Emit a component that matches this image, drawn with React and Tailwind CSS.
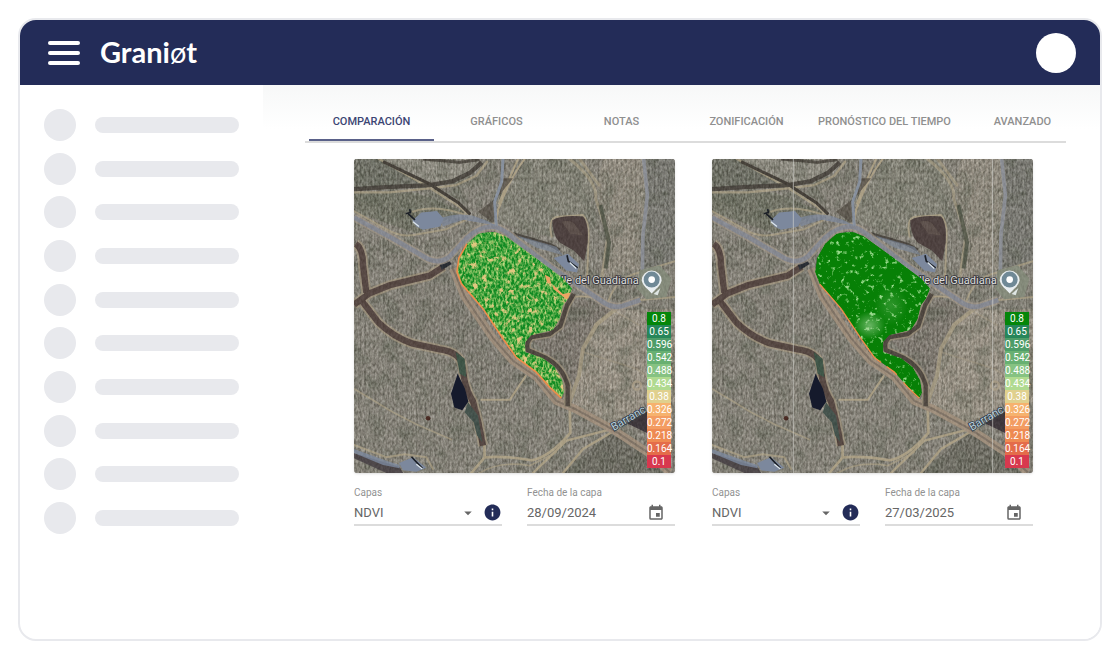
import { useState } from "react";
import { MdArrowDropDown, MdEvent, MdInfo } from "react-icons/md";

const TABS = [
  "Comparación",
  "Gráficos",
  "Notas",
  "Zonificación",
  "Pronóstico del tiempo",
  "Avanzado",
];

const LEGEND = [
  { value: "0.8", color: "bg-[#04860a]" },
  { value: "0.65", color: "bg-[#27865a]" },
  { value: "0.596", color: "bg-[#4d9c68]" },
  { value: "0.542", color: "bg-[#68b072]" },
  { value: "0.488", color: "bg-[#86c282]" },
  { value: "0.434", color: "bg-[#b0da90]" },
  { value: "0.38", color: "bg-[#e0d08e]" },
  { value: "0.326", color: "bg-[#f6b26e]" },
  { value: "0.272", color: "bg-[#f39c62]" },
  { value: "0.218", color: "bg-[#ee8a52]" },
  { value: "0.164", color: "bg-[#e46c4a]" },
  { value: "0.1", color: "bg-[#d8384e]" },
];

const LAYERS = [
  { id: "before", date: "28/09/2024", dense: false },
  { id: "after", date: "27/03/2025", dense: true },
];

const PLOT =
  "M386 236Q410 228 440 231L470 244L560 309L640 369L668 400L655 430L640 450L630 492L610 524L545 540L527 560L527 590L580 608L615 635L638 675L643 712L635 728L600 695L560 650L500 606L460 550L400 460L335 385L322 350L328 308L352 266Z";

const PLOT_EDGE =
  "M352 266L328 308L322 350L335 385L400 460L460 550L500 606L560 650L600 695L635 728";

const ROADS =
  "M13 187L120 245L236 312Q270 326 300 304L350 250Q385 214 432 214Q465 222 500 256L600 333L700 400L760 440Q795 464 830 448L872 434";

const CHANNELS =
  "M13 448L60 414L120 390L240 361L282 334M18 266Q40 280 40 330L50 412M36 436L85 500Q130 545 190 565L270 582Q330 590 338 630L344 672Q352 710 370 738L386 800L400 870";

function Terrain({ id, dense }) {
  return (
    <svg
      viewBox="13 12 963 940"
      preserveAspectRatio="none"
      className="block h-full w-full"
      role="img"
      aria-label="Imagen satelital de la parcela"
    >
      <defs>
        <filter id={`${id}-grain`} x="0" y="0" width="1" height="1" colorInterpolationFilters="sRGB">
          <feTurbulence type="fractalNoise" baseFrequency="0.16 0.09" numOctaves="2" seed="4" />
          <feColorMatrix values="1.5 0 0 0 -0.22  1.5 0 0 0 -0.23  1.5 0 0 0 -0.27  0 0 0 0 0.2" />
        </filter>
        <filter id={`${id}-blotch`} x="0" y="0" width="1" height="1" colorInterpolationFilters="sRGB">
          <feTurbulence type="fractalNoise" baseFrequency="0.02" numOctaves="4" seed="9" />
          <feColorMatrix values="0 0 0 0 0.3  0 0 0 0 0.33  0 0 0 0 0.27  2.5 0 0 0 -1.1" />
        </filter>
        <filter id={`${id}-speckle`} x="0" y="0" width="1" height="1" colorInterpolationFilters="sRGB">
          <feTurbulence
            type="fractalNoise"
            baseFrequency={dense ? "0.07" : "0.15 0.09"}
            numOctaves={dense ? 4 : 2}
            seed="7"
          />
          <feColorMatrix
            values={
              dense
                ? "0 0 0 0 0.6  0 0 0 0 0.86  0 0 0 0 0.55  5 0 0 0 -2.95"
                : "0 0 0 0 0.74  0 0 0 0 0.85  0 0 0 0 0.5  2.4 0 0 0 -0.9"
            }
          />
        </filter>
        <filter id={`${id}-patches`} x="0" y="0" width="1" height="1" colorInterpolationFilters="sRGB">
          <feTurbulence type="fractalNoise" baseFrequency="0.06 0.05" numOctaves="4" seed="21" />
          <feColorMatrix values="0 0 0 0 0.88  0 0 0 0 0.78  0 0 0 0 0.5  6 0 0 0 -3.5" />
        </filter>
        <pattern id={`${id}-rows`} width="14" height="20" patternUnits="userSpaceOnUse">
          <path d="M4 0V20" stroke="#3e3d36" strokeWidth="4" opacity="0.26" />
        </pattern>
        <pattern
          id={`${id}-slant`}
          width="16"
          height="16"
          patternUnits="userSpaceOnUse"
          patternTransform="rotate(52)"
        >
          <path d="M4 0V16" stroke="#b3ab99" strokeWidth="3" opacity="0.35" />
        </pattern>
        <radialGradient id={`${id}-glow`}>
          <stop offset="0" stopColor="#a8d8a0" stopOpacity="0.6" />
          <stop offset="1" stopColor="#a8d8a0" stopOpacity="0" />
        </radialGradient>
        <clipPath id={`${id}-plot`}>
          <path d={PLOT} />
        </clipPath>
      </defs>

      {/* Fields */}
      <path d="M13 12H976V952H13Z" fill="#8b877e" />
      <path d="M13 112H200L345 170L200 235L13 170Z" fill="#737567" />
      <path d="M13 12H90L240 90L13 100Z" fill="#6f7167" />
      <path d="M100 12H400L340 70L250 85Z" fill="#97948a" />
      <path d="M530 12H690L735 90L715 190L610 185L600 245L450 205L445 160Z" fill="#8a897d" />
      <path d="M760 12H880L890 130L876 340L750 380L775 250L740 100Z" fill="#979084" />
      <path d="M890 12H976V320L880 345L895 120Z" fill="#7a7a75" />
      <path d="M735 500L800 465L976 460V740L890 745L790 815L670 745Z" fill="#a2998c" />
      <path d="M640 952L785 830L890 895L940 952Z" fill="#6b6a61" />
      <path d="M60 460L282 345L330 400L490 615L530 665L480 732H395L345 620L280 580L120 525Z" fill="#88847b" />
      <path d="M545 550L640 515L670 430L760 440L795 462L735 505L670 700L640 640Z" fill="#817a72" />
      <path d="M13 12H976V952H13Z" fill={`url(#${id}-rows)`} />
      <path d="M760 12H880L890 130L876 340L750 380L775 250L740 100Z" fill={`url(#${id}-slant)`} />
      <path d="M735 500L800 465L976 460V740L890 745L790 815L670 745Z" fill={`url(#${id}-slant)`} />
      <path d="M770 190L890 110M775 205L880 150" stroke="#aaa397" strokeWidth="4" opacity="0.7" />
      <rect x="13" y="12" width="963" height="940" filter={`url(#${id}-blotch)`} opacity="0.5" />
      <rect x="13" y="12" width="963" height="940" filter={`url(#${id}-grain)`} />

      {/* Dirt tracks */}
      <g fill="none" stroke="#ada186" strokeLinejoin="round" strokeLinecap="round">
        <path d="M88 12L240 98L330 155L368 190M13 112H120L240 100L320 90L380 62L412 20" strokeWidth="7" opacity="0.75" />
        <path d="M13 168L110 222Q150 248 200 238L290 222L368 186M190 170Q260 145 360 184" strokeWidth="6" opacity="0.75" />
        <path d="M525 12Q480 70 445 165L440 200M505 12L470 90L448 145" strokeWidth="6" />
        <path d="M660 12Q745 80 738 130L775 240L755 375M690 12L748 90" strokeWidth="9" opacity="0.6" />
        <path d="M606 245Q595 195 618 186L700 180Q718 200 717 240L712 375" strokeWidth="6" opacity="0.85" />
        <path d="M13 700L130 770L200 806L305 852" strokeWidth="5" opacity="0.7" />
        <path d="M395 733H480L528 662" strokeWidth="6" />
        <path d="M365 952L405 905Q470 900 545 914Q600 905 662 832L660 742M405 905L404 870" strokeWidth="8" />
        <path d="M390 952Q450 915 540 930L620 890" strokeWidth="5" opacity="0.7" />
        <path d="M550 952L650 855L780 822M640 952L700 880L790 828L890 765" strokeWidth="7" />
        <path d="M800 460L740 508L700 580L688 660L662 735" strokeWidth="12" opacity="0.75" />
        <path d="M700 590L860 640L890 660M800 470L870 510" strokeWidth="5" opacity="0.4" />
        <path d="M870 350L976 318M870 352Q800 365 775 440M872 434L976 425" strokeWidth="6" opacity="0.8" />
        <path d="M13 868L110 905L165 896L230 905L250 940" strokeWidth="6" opacity="0.8" />
        <path d="M670 425Q700 420 740 428" strokeWidth="5" />
      </g>

      {/* Drainage channels */}
      <path d={CHANNELS} fill="none" stroke="#a4977f" strokeWidth="30" opacity="0.75" />
      <path d={CHANNELS} fill="none" stroke="#53443f" strokeWidth="19" />
      <g fill="none" stroke="#403b35" strokeLinejoin="round">
        <path d="M13 102L110 96L240 90L310 78L360 54L396 22" strokeWidth="13" opacity="0.85" />
        <path d="M100 20L235 84L325 142L362 178" strokeWidth="9" />
        <path d="M220 12L330 22L390 14" strokeWidth="9" opacity="0.8" />
        <path d="M455 226L540 250L600 268L630 285" strokeWidth="10" opacity="0.85" />
        <path d="M752 150L778 262L768 340" strokeWidth="12" stroke="#474d40" opacity="0.8" />
      </g>
      <path d="M462 70L436 132L385 170L432 206V140L490 70Z" fill="#504a41" opacity="0.75" />
      <path d="M608 195Q640 178 700 184Q718 200 714 262L704 318L672 286L630 262Q608 240 608 195Z" fill="#4a3d3c" />
      <path d="M636 200Q668 192 680 214L700 240L662 236Z" fill="#63554f" opacity="0.7" />
      <path d="M270 328L296 314L306 326L276 344Z" fill="#22262e" />
      <path d="M13 892L150 934L160 952H110L13 908Z" fill="#4a4447" />
      <path d="M830 802L892 768V832Z" fill="#3a3238" />
      <path d="M318 590L345 610L350 665L330 655Z" fill="#3a5244" />
      <path d="M355 740L385 780L398 860L382 840L372 800L345 770Z" fill="#40504a" />
      <circle cx="235" cy="788" r="7" fill="#47261f" />
      <circle cx="862" cy="690" r="12" fill="none" stroke="#a99d87" strokeWidth="7" />

      {/* Paved roads */}
      <g fill="none" strokeLinejoin="round">
        <path d={ROADS} stroke="#a1978a" strokeWidth="24" opacity="0.75" />
        <path d={ROADS} stroke="#868993" strokeWidth="14" />
        <path d="M460 12L456 80L435 140L440 212" stroke="#8791a0" strokeWidth="9" />
        <path d="M882 12L893 120L880 240L878 350L886 420" stroke="#8b8f96" strokeWidth="11" />
        <path d="M310 340L345 424L430 548L490 616L560 664L620 736L680 762L790 822L900 894L960 950" stroke="#a08f7c" strokeWidth="24" />
        <path d="M310 340L345 424L430 548L490 616L560 664L620 736L680 762L790 822L900 894L960 950" stroke="#7f7265" strokeWidth="6" />
        <path d="M672 416L652 450L632 512L600 536L545 545Q528 560 534 584L590 608Q640 635 654 690L654 752" stroke="#958a76" strokeWidth="22" />
        <path d="M672 416L652 450L632 512L600 536L545 545Q528 560 534 584L590 608Q640 635 654 690L654 752" stroke="#4b433c" strokeWidth="13" />
      </g>
      <path d="M870 345L930 330L965 370L950 425L890 432L862 400Z" fill="#858b7b" />
      <rect x="13" y="12" width="963" height="940" filter={`url(#${id}-grain)`} opacity="0.4" />

      {/* Water */}
      <g fill="#7c889d">
        <path d="M188 196L215 172L262 168L282 190L272 214L220 224L200 214Z" />
        <path d="M270 190Q320 172 370 182L410 196L440 212L400 204L340 194L280 214Z" opacity="0.7" />
        <path d="M612 308L655 296L688 326L682 352L650 346Z" />
        <path d="M500 240L620 275L640 300L560 278Z" opacity="0.6" />
        <path d="M148 922L190 905L230 936L200 948L160 944Z" />
        <path d="M13 880L110 915L150 928V938L100 928L13 892Z" opacity="0.8" />
      </g>
      <path d="M324 655L346 700L356 738L338 764L314 756L304 715Z" fill="#151a2c" />
      <path d="M168 176L182 172L180 162M176 176L196 194M652 300L656 318L684 338M186 904L218 938" stroke="#1c2027" strokeWidth="5" fill="none" />
      <path d="M190 200L208 214M660 322L680 340M200 926L218 940" stroke="#dde6ec" strokeWidth="4" />

      {/* Place name sits under the index layer */}
      <text
        x="634"
        y="387"
        fontFamily="Roboto, sans-serif"
        fontSize="33"
        fill="#dcdcda"
        stroke="#34343a"
        strokeWidth="5"
        paintOrder="stroke"
      >
        lle del Guadiana
      </text>
      <text
        x="792"
        y="826"
        transform="rotate(-30 792 826)"
        fontFamily="Roboto, sans-serif"
        fontSize="33"
        fill="#b9cdd8"
        stroke="#34404c"
        strokeWidth="5"
        paintOrder="stroke"
      >
        Barranc
      </text>

      {/* Index layer */}
      <g clipPath={`url(#${id}-plot)`}>
        <path d={PLOT} fill={dense ? "#078006" : "#108a22"} />
        <rect x="313" y="222" width="362" height="514" filter={`url(#${id}-speckle)`} />
        {dense ? (
          <>
            <ellipse cx="486" cy="510" rx="48" ry="42" fill={`url(#${id}-glow)`} />
            <ellipse cx="550" cy="450" rx="50" ry="60" fill={`url(#${id}-glow)`} opacity="0.4" />
          </>
        ) : (
          <>
            <rect x="313" y="222" width="362" height="514" filter={`url(#${id}-patches)`} />
            <path d="M585 358L600 366L605 386L592 382ZM608 388L640 416L664 412L668 424L650 432L612 402Z" fill="#eda464" />
          </>
        )}
      </g>
      <path
        d={PLOT_EDGE}
        fill="none"
        stroke="#ee8d4b"
        strokeWidth={dense ? 4 : 5}
        strokeDasharray={dense ? "0 130 300 20 40 30 90 400" : "none"}
      />
      {dense && <path d="M257 12V952M855 12V952" stroke="#d9d9d4" strokeWidth="3" opacity="0.6" />}

      {/* Pin */}
      <path d="M876 376A30 30 0 1 1 936 376Q932 392 919 401L906 415L893 401Q880 392 876 376Z" fill="#e9eef0" />
      <circle cx="906" cy="373" r="24" fill="#708996" />
      <circle cx="906" cy="373" r="10" fill="#fff" />
      <path d="M912 416L932 398L924 420Z" fill="#dfe6e4" />
    </svg>
  );
}

function LayerPanel({ id, date, dense }) {
  return (
    <section className="min-w-0 flex-1">
      <div className="relative aspect-[321/314] overflow-hidden rounded-[3px] shadow">
        <Terrain id={id} dense={dense} />
        <ul className="absolute right-1 bottom-[5px] w-6 text-center text-[10px] leading-[13px] text-white">
          {LEGEND.map((item) => (
            <li key={item.value} className={item.color}>
              {item.value}
            </li>
          ))}
        </ul>
      </div>

      <div className="mt-[14px] flex gap-[25px] text-[#666]">
        <div className="min-w-0 flex-1">
          <label htmlFor={`${id}-layer`} className="block text-[10px] leading-3 text-[#929292]">
            Capas
          </label>
          <div className="mt-1 flex h-[23px] items-center border-b-2 border-[#dcdcdc] pb-[2px]">
            <select
              id={`${id}-layer`}
              defaultValue="NDVI"
              className="min-w-0 flex-1 appearance-none bg-transparent text-[13px] leading-4 outline-none"
            >
              <option>NDVI</option>
            </select>
            <MdArrowDropDown size={18} className="pointer-events-none shrink-0" />
            <button type="button" aria-label="Información de la capa" className="ml-[6px] shrink-0 text-[#232c58]">
              <MdInfo size={19} />
            </button>
          </div>
        </div>
        <div className="min-w-0 flex-1">
          <label htmlFor={`${id}-date`} className="block text-[10px] leading-3 text-[#929292]">
            Fecha de la capa
          </label>
          <div className="mt-1 flex h-[23px] items-center border-b-2 border-[#dcdcdc] pr-[10px] pb-[2px]">
            <input
              id={`${id}-date`}
              type="text"
              defaultValue={date}
              className="min-w-0 flex-1 bg-transparent text-[13px] leading-4 outline-none"
            />
            <button type="button" aria-label="Abrir calendario" className="shrink-0">
              <MdEvent size={18} />
            </button>
          </div>
        </div>
      </div>
    </section>
  );
}

export default function App() {
  const [activeTab, setActiveTab] = useState(TABS[0]);

  return (
    <div className="flex min-h-screen bg-white p-[18px] font-[Roboto,sans-serif]">
      <div className="flex flex-1 flex-col overflow-hidden rounded-[18px] border-2 border-[#e8e9ed]">
        {/* Header */}
        <header className="flex h-[65px] shrink-0 items-center bg-[#232c58] pr-6 pl-7 text-white">
          <button type="button" aria-label="Menú" className="flex w-8 flex-col gap-[6px]">
            <span className="h-1 rounded-full bg-white" />
            <span className="h-1 rounded-full bg-white" />
            <span className="h-1 rounded-full bg-white" />
          </button>
          <a href="#" className="ml-5 pb-[2px] font-[Lato,sans-serif] text-[29px] leading-8 font-bold">
            Grani<span className="font-normal">ø</span>t
          </a>
          <button type="button" aria-label="Cuenta" className="ml-auto size-10 rounded-full bg-white" />
        </header>

        <div className="flex flex-1">
          {/* Sidebar placeholder */}
          <aside className="w-[243px] shrink-0 p-6">
            <ul className="flex h-[425px] flex-col justify-between">
              {Array.from({ length: 10 }, (_, i) => (
                <li key={i} className="flex items-center gap-[19px]">
                  <span className="size-8 shrink-0 rounded-full bg-[#e8e9ed]" />
                  <span className="h-4 flex-1 rounded-full bg-[#e8e9ed]" />
                </li>
              ))}
            </ul>
          </aside>

          {/* Content */}
          <main className="min-w-0 flex-1 bg-linear-to-b from-[#f7f8f8] to-white to-[44px] pt-4">
            <nav className="mr-[34px] ml-[42px] flex overflow-hidden border-b-2 border-[#dcdcdc] px-1">
              {TABS.map((tab) => (
                <button
                  key={tab}
                  type="button"
                  onClick={() => setActiveTab(tab)}
                  className={`h-10 min-w-[125px] shrink-0 border-b-2 px-[9px] pt-1 text-[11px] font-medium uppercase ${
                    tab === activeTab
                      ? "border-[#5a6189] text-[#3c4573]"
                      : "border-transparent text-[#8f8f8f]"
                  }`}
                >
                  {tab}
                </button>
              ))}
            </nav>

            <div className="mt-4 mr-[67px] ml-[91px] flex gap-[37px]">
              {LAYERS.map((layer) => (
                <LayerPanel key={layer.id} {...layer} />
              ))}
            </div>
          </main>
        </div>
      </div>
    </div>
  );
}
